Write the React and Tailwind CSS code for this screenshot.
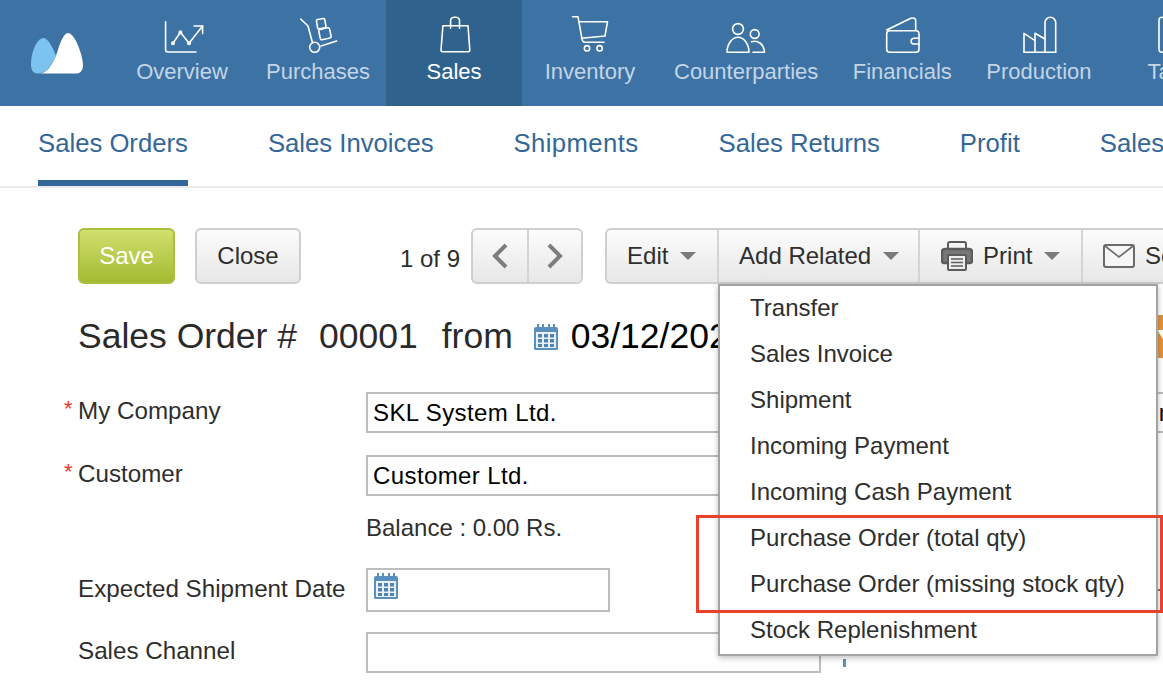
import React from 'react';

const sans = 'font-["Liberation_Sans",Arial,sans-serif]';

const Logo = () => (
  <svg width="52" height="42" viewBox="0 0 52 42">
    <path d="M0 32C0 20 6 6 12.5 6 17 6 22 16 25 24 20 35 14 41 8 41.5H6C2 41.5 0 38 0 32Z" fill="#7cc3ef" />
    <path d="M9 41.5C16 41 21 33 25 24 28 14 32 1 37 1 44 1 52 24 52 33 52 39 49 41.5 45 41.5Z" fill="#fff" />
  </svg>
);

const Icon = ({ children }) => (
  <svg width="48" height="42" viewBox="0 0 48 42" fill="none" stroke="#fff" strokeWidth="1.6" strokeLinecap="round" strokeLinejoin="round">
    {children}
  </svg>
);

const navItems = [
  {
    label: 'Overview',
    icon: (
      <>
        <path d="M7.6 7.7V35.5Q7.6 38 10 38H38" />
        <path d="M15 29.3L22.4 18.3 31 29.3 44.6 12" />
        <path d="M36 12H44.6V19.5" />
        <circle cx="15" cy="29.3" r="1.2" fill="#fff" />
        <circle cx="22.4" cy="18.3" r="1.2" fill="#fff" />
        <circle cx="31" cy="29.3" r="1.2" fill="#fff" />
      </>
    ),
  },
  {
    label: 'Purchases',
    icon: (
      <>
        <path d="M6.7 5L14 12 18.5 28.7" />
        <circle cx="20.7" cy="33.3" r="5" />
        <path d="M27 32L42.6 27" />
        <rect x="23" y="5" width="8.5" height="9.5" rx="1.5" transform="rotate(-10 27 10)" />
        <rect x="25.5" y="14.5" width="11" height="10.5" rx="1.5" transform="rotate(-12 31 20)" />
      </>
    ),
  },
  {
    label: 'Sales',
    active: true,
    icon: (
      <>
        <path d="M12.9 11.7H38L39.8 36Q39.8 37.7 38 37.7H12.8Q11 37.7 11 36Z" />
        <path d="M20.6 14.3V7.5A3.5 3.5 0 0 1 24 3.3H26A3.5 3.5 0 0 1 29.5 7.5V14.3" />
      </>
    ),
  },
  {
    label: 'Inventory',
    icon: (
      <>
        <path d="M6.6 2.7H12L16 25Q16.5 28.3 19 28.3H38" />
        <path d="M13 7.7H41.5L39 22 15.5 24.3" />
        <circle cx="21" cy="34.3" r="2.7" />
        <circle cx="33.6" cy="34.3" r="2.7" />
      </>
    ),
  },
  {
    label: 'Counterparties',
    icon: (
      <>
        <circle cx="16" cy="15" r="5.4" />
        <path d="M5 38.3C5 30 10 23.3 16 23.3S27 30 27 38.3Z" />
        <circle cx="32.7" cy="20" r="4.4" />
        <path d="M29.5 27.7C36 26 42 30 42.5 38.3H31" />
      </>
    ),
  },
  {
    label: 'Financials',
    icon: (
      <>
        <rect x="8.7" y="16.7" width="32.3" height="21.6" rx="3" />
        <path d="M8.7 16L32.8 4.3Q37.7 3 37.7 7V16.5" />
        <path d="M41 24.3H35.5A2.9 2.9 0 0 0 35.5 30H41" />
      </>
    ),
  },
  {
    label: 'Production',
    icon: (
      <>
        <path d="M9 38.3V19.3L20 26.7V19.3L30 25" />
        <path d="M30 38.3V8.6A5.35 5.35 0 0 1 40.7 8.6V38.3" />
        <path d="M20 26.7V38.3M9 38.3H40.7" />
      </>
    ),
  },
  {
    label: 'Tasks',
    icon: <rect x="7" y="3.3" width="28" height="35" rx="3" />,
  },
];

const tabs = ['Sales Orders', 'Sales Invoices', 'Shipments', 'Sales Returns', 'Profit', 'Sales Plan'];

const relatedItems = [
  'Transfer',
  'Sales Invoice',
  'Shipment',
  'Incoming Payment',
  'Incoming Cash Payment',
  'Purchase Order (total qty)',
  'Purchase Order (missing stock qty)',
  'Stock Replenishment',
];

const Caret = () => (
  <svg width="16" height="8" viewBox="0 0 16 8" className="shrink-0">
    <path d="M0 0H16L8 8Z" fill="#7a7a7a" />
  </svg>
);

const Calendar = ({ size = 24 }) => (
  <svg width={size} height={size + 2} viewBox="0 0 24 26" className="shrink-0">
    <path d="M2 3H22Q24 3 24 5V25Q24 26 22 26H2Q0 26 0 25V5Q0 3 2 3Z" fill="#5a8fbd" />
    <path d="M4 0V5M9 0V5M15 0V5M20 0V5" stroke="#5a8fbd" strokeWidth="2" />
    <rect x="2" y="8" width="20" height="16" fill="#e9f0f6" />
    <g fill="#4f84b2">
      <rect x="4" y="10" width="4" height="3.5" />
      <rect x="10" y="10" width="4" height="3.5" />
      <rect x="16" y="10" width="4" height="3.5" />
      <rect x="4" y="15" width="4" height="3.5" />
      <rect x="10" y="15" width="4" height="3.5" />
      <rect x="16" y="15" width="4" height="3.5" />
      <rect x="4" y="20" width="4" height="3" />
      <rect x="10" y="20" width="4" height="3" />
      <rect x="16" y="20" width="4" height="3" />
    </g>
  </svg>
);

const Printer = () => (
  <svg width="32" height="30" viewBox="0 0 32 30" fill="none" stroke="#5c5c5c" className="shrink-0">
    <path d="M7 9V3Q7 1 9 1H23Q25 1 25 3V9" strokeWidth="2" />
    <path d="M7 22H3Q1 22 1 20V11Q1 8 4 8H28Q31 8 31 11V20Q31 22 29 22H25" strokeWidth="2.4" fill="#777" />
    <rect x="7" y="14" width="18" height="15" rx="1" strokeWidth="2" fill="#eee" />
    <path d="M10 18H22M10 21.5H22M10 25H22" strokeWidth="1.5" />
  </svg>
);

const Mail = () => (
  <svg width="32" height="24" viewBox="0 0 32 24" fill="none" stroke="#6a6a6a" className="shrink-0">
    <rect x="1" y="1" width="30" height="22" rx="2" strokeWidth="2" fill="#f6f6f6" />
    <path d="M2 2L16 13 30 2" strokeWidth="1.6" />
  </svg>
);

const Chevron = ({ flip }) => (
  <svg width="16" height="26" viewBox="0 0 16 26" fill="none" stroke="#7d7d7d" strokeWidth="4" className={flip ? 'rotate-180' : ''}>
    <path d="M14 2L3 13 14 24" />
  </svg>
);

const btnClass =
  'flex items-center bg-gradient-to-b from-[#fcfcfc] to-[#e7e7e7] border-2 border-[#cfcfcf] text-[#2e2e2e]';

function FormRow({ label, required, className = '', children }) {
  return (
    <div className={`flex items-center ${className}`}>
      <span className="w-[14px] shrink-0 pb-[8px] text-[#f0352a] text-[22px] leading-none">{required ? '*' : ''}</span>
      <span className="w-[288px] shrink-0 pb-[2px] text-[24.2px] text-[#2e2e2e]">{label}</span>
      {children}
    </div>
  );
}

const inputClass = 'h-[41px] shrink-0 border-2 border-[#bdbdbd] bg-white flex items-center px-[5px] text-[24px] tracking-[0.4px] text-black';

export default function App() {
  return (
    <div className={`relative w-[1163px] h-[682px] overflow-hidden bg-white ${sans}`}>
      {/* Top navigation */}
      <nav className="flex h-[106px] bg-[#3d72a5]">
        <div className="w-[114px] shrink-0 flex items-center justify-center">
          <Logo />
        </div>
        {navItems.map((item) => (
          <div
            key={item.label}
            className={`min-w-[136px] shrink-0 px-[16px] pt-[14px] flex flex-col items-center ${item.active ? 'bg-[#30628e]' : ''}`}
          >
            <Icon>{item.icon}</Icon>
            <span className={`mt-[1px] text-[22px] leading-[30px] ${item.active ? 'text-white' : 'text-[#c3d5e6]'}`}>{item.label}</span>
          </div>
        ))}
      </nav>

      {/* Sub tabs */}
      <div className="flex h-[82px] gap-[80px] pl-[38px] border-b-2 border-[#ececec] overflow-hidden">
        {tabs.map((tab, i) => (
          <div
            key={tab}
            className={`shrink-0 h-[80px] pt-[21px] text-[25.7px] leading-[32px] text-[#336799] ${i === 0 ? 'border-b-[6px] border-[#336799]' : ''} ${tab === 'Shipments' ? 'tracking-[0.4px]' : ''}`}
          >
            {tab}
          </div>
        ))}
      </div>

      {/* Toolbar */}
      <div className="flex items-center h-[56px] mt-[40px] pl-[78px] text-[24px]">
        <button className="w-[97px] h-[56px] shrink-0 rounded-[6px] border-2 border-[#a9c03e] bg-gradient-to-b from-[#d0e06c] to-[#a4ba30] text-white">
          Save
        </button>
        <button className={`${btnClass} justify-center w-[106px] h-[56px] ml-[20px] shrink-0 rounded-[6px]`}>Close</button>
        <span className="ml-[99px] mt-[6px] shrink-0 text-[#2e2e2e]">1 of 9</span>
        <div className={`${btnClass} w-[112px] h-[56px] ml-[11px] shrink-0 rounded-[6px]`}>
          <div className="w-[56px] h-full flex items-center justify-center border-r-2 border-[#d4d4d4]">
            <Chevron />
          </div>
          <div className="flex-1 h-full flex items-center justify-center">
            <Chevron flip />
          </div>
        </div>

        <div className={`${btnClass} h-[56px] ml-[22px] shrink-0 rounded-l-[6px] border-r-0`}>
          <div className="w-[112px] h-full flex items-center pl-[20px] gap-[12px] border-r-2 border-[#d4d4d4]">
            Edit <Caret />
          </div>
          <div className="relative w-[201px] h-full">
            <div className="h-full flex items-center pl-[20px] gap-[12px] border-r-2 border-[#d4d4d4]">
              Add Related <Caret />
            </div>
            {/* Add Related menu */}
            <div className="absolute z-10 -left-[1px] top-[54px] w-[440px] h-[372px] bg-white border-2 border-[#a3a3a3] shadow-[0_2px_6px_rgba(0,0,0,0.25)]">
              <div className="-mt-[1px]">
                {relatedItems.map((item) => (
                  <div key={item} className="h-[46px] flex items-center pl-[30px] text-[24px] text-[#2e2e2e] whitespace-nowrap">
                    {item}
                  </div>
                ))}
              </div>
            </div>
          </div>
          <div className="w-[163px] h-full flex items-center pl-[21px] border-r-2 border-[#d4d4d4]">
            <Printer />
            <span className="ml-[10px]">Print</span>
            <span className="ml-[12px]">
              <Caret />
            </span>
          </div>
          <div className="w-[120px] h-full flex items-center pl-[20px] gap-[10px]">
            <Mail /> Send
          </div>
        </div>
      </div>

      {/* Title */}
      <div className="flex items-center h-[43px] mt-[30px] pt-[2px] pl-[78px] text-[35.5px] text-[#2a2a2a] whitespace-nowrap">
        <span>Sales Order #</span>
        <span className="ml-[22px]">00001</span>
        <span className="ml-[24px]">from</span>
        <span className="ml-[21px] mr-[13px]">
          <Calendar />
        </span>
        <span className="text-black">03/12/2021</span>
        <svg width="60" height="43" viewBox="0 0 60 43" className="ml-[409px] shrink-0">
          <rect width="60" height="43" fill="#e09440" />
          <path d="M0 15L6 24V15Z" fill="#fff" />
        </svg>
      </div>

      {/* Form */}
      <div className="mt-[35px] pl-[64px]">
        <FormRow label="My Company" required>
          <div className={`${inputClass} w-[455px]`}>SKL System Ltd.</div>
          <div className={`${inputClass} w-[120px] ml-[291px]`}>Main</div>
        </FormRow>
        <FormRow label="Customer" required className="mt-[22px]">
          <div className={`${inputClass} w-[455px]`}>Customer Ltd.</div>
        </FormRow>
        <div className="mt-[17px] pl-[302px] h-[30px] text-[24px] leading-[30px] text-[#2e2e2e]">Balance : 0.00 Rs.</div>
        <FormRow label="Expected Shipment Date" className="mt-[25px]">
          <div className={`${inputClass} w-[244px] h-[44px]`}>
            <span className="ml-[1px] -mt-[8px]">
              <Calendar />
            </span>
          </div>
          <div className="w-[5px] h-[2px] ml-[548px] bg-[#777]" />
        </FormRow>
        <FormRow label="Sales Channel" className="mt-[20px]">
          <div className={`${inputClass} w-[455px]`} />
          <div className="w-[3px] h-[8px] ml-[22px] mt-[20px] bg-[#5a8fbd]" />
        </FormRow>
      </div>

      {/* Annotation around the purchase order items */}
      <div className="absolute z-20 left-[696px] top-[515px] w-[467px] h-[98px] border-[3px] border-[#e8432a]" />
    </div>
  );
}
